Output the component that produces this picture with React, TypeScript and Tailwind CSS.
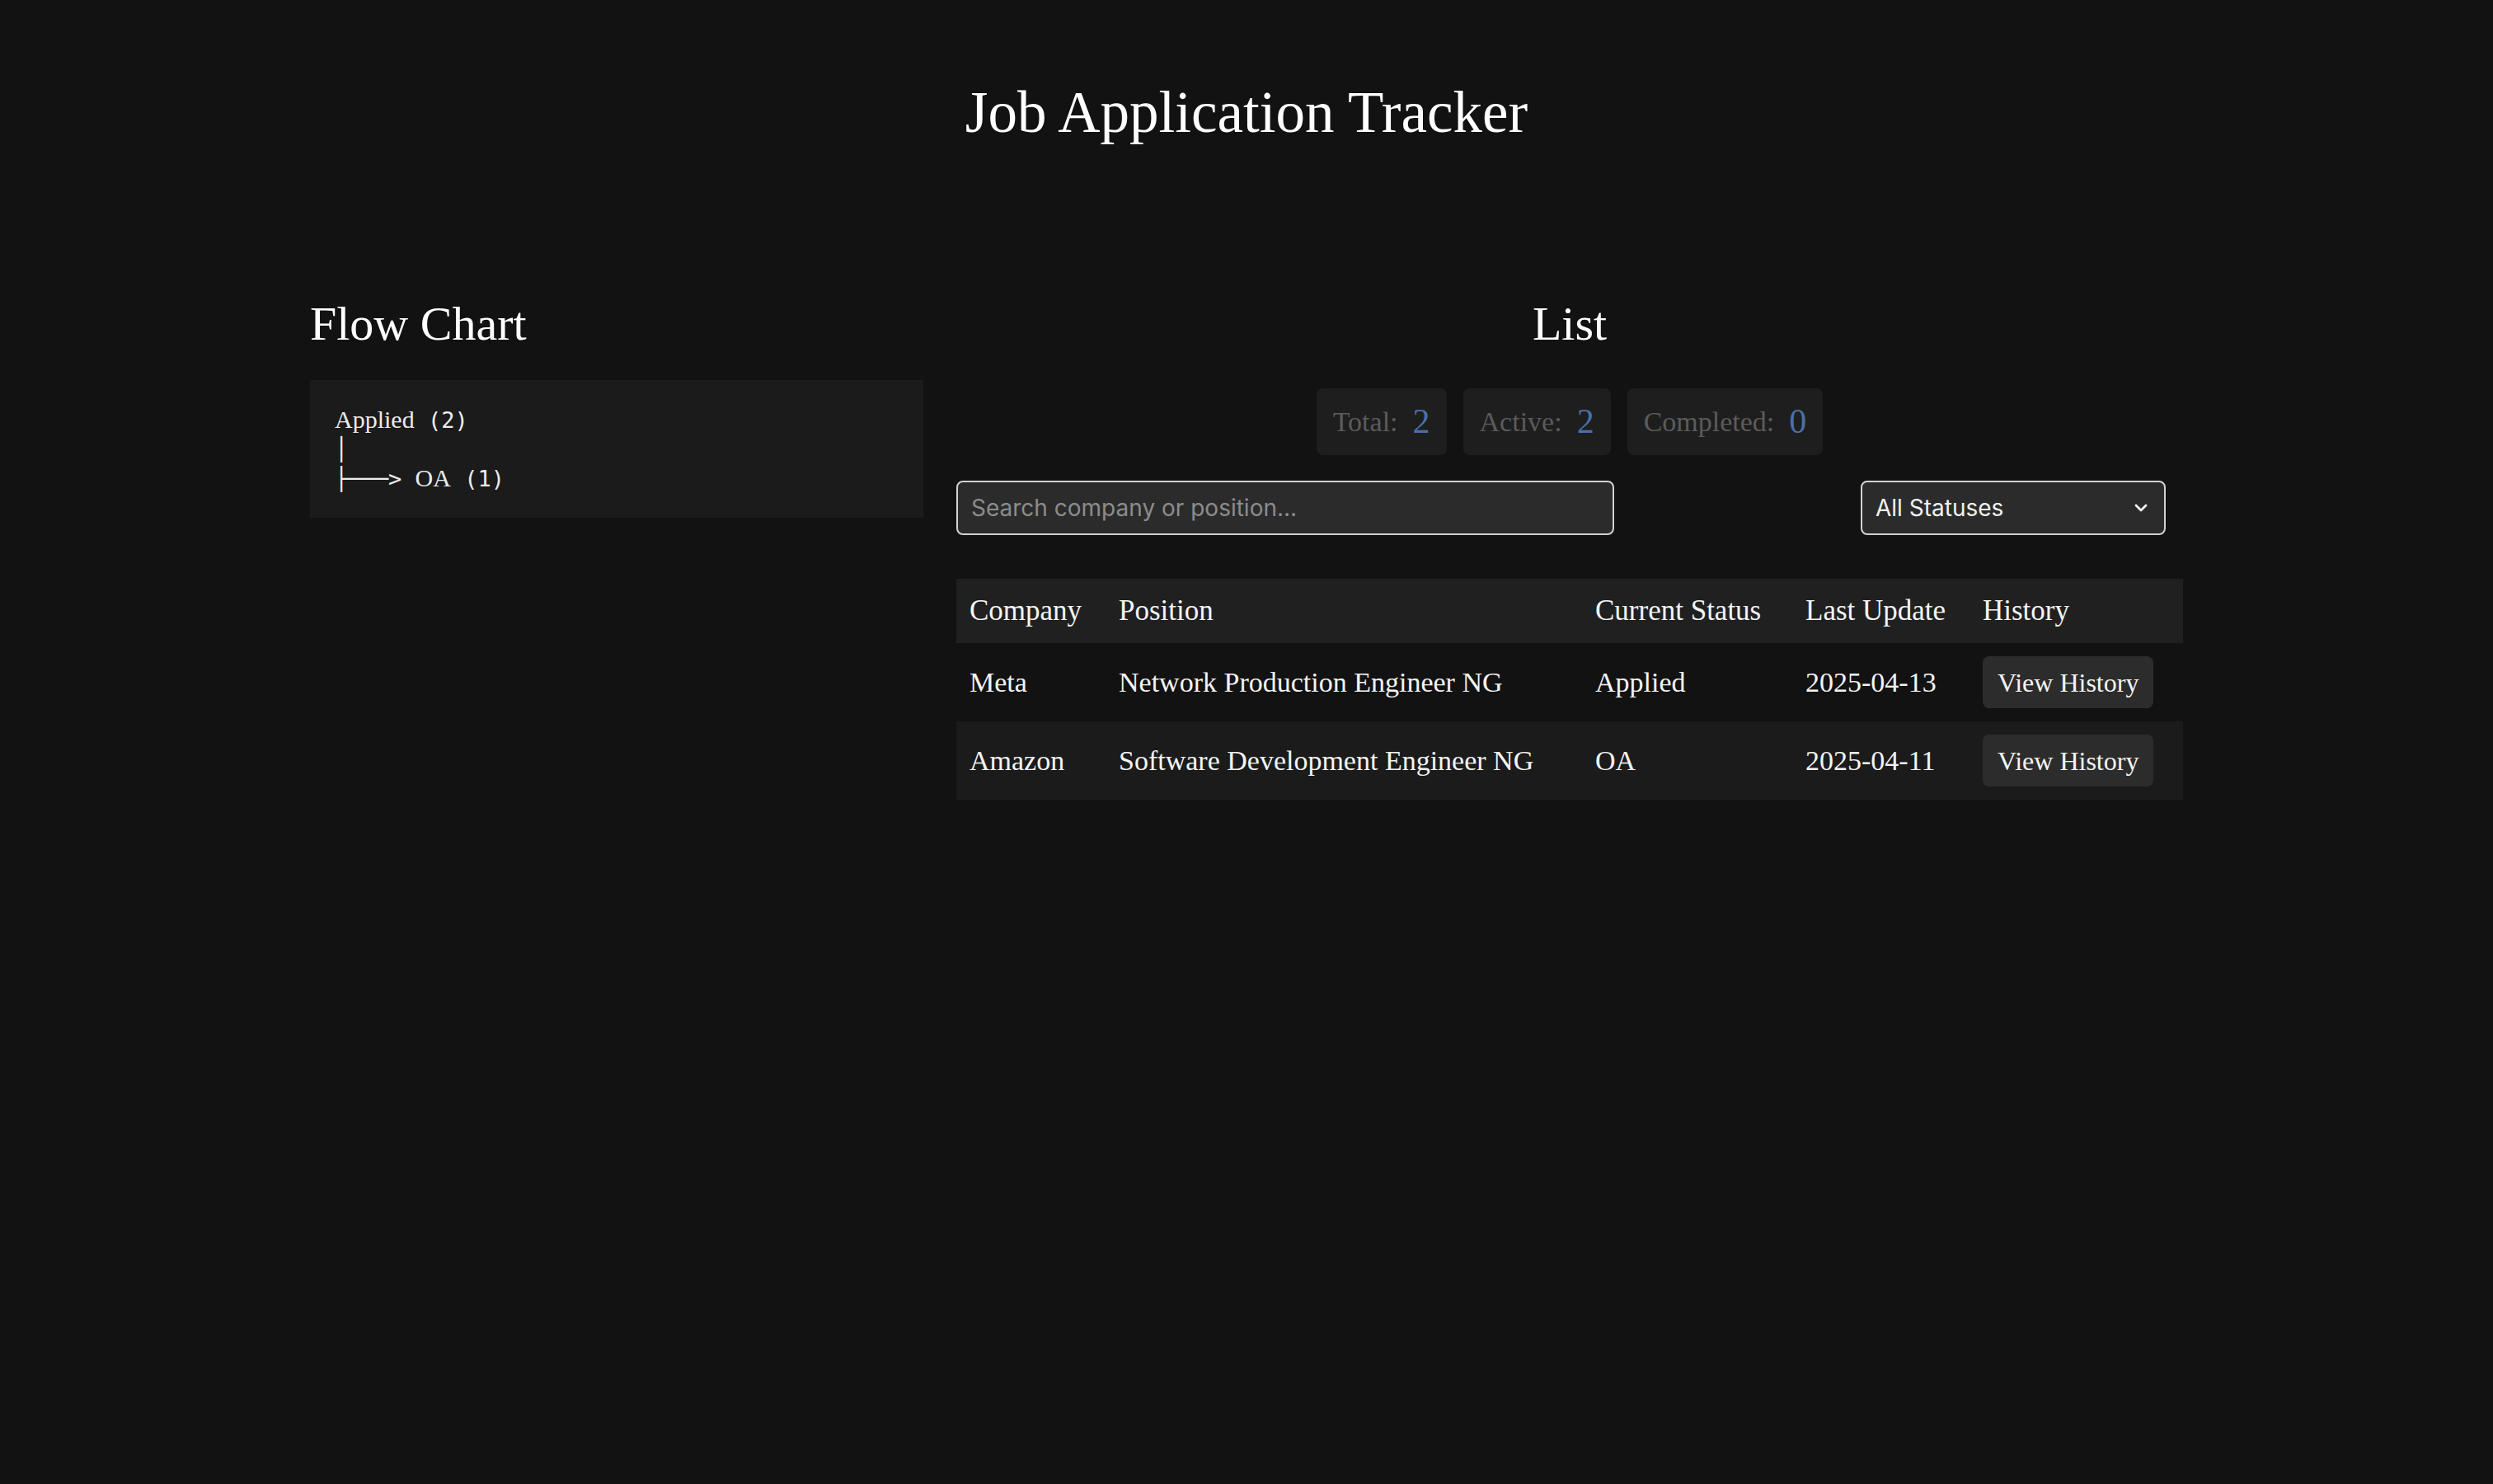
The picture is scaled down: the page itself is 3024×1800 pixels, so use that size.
import {ChevronDown} from 'lucide-react';
import {FC, memo, useState} from 'react';

type Application = {
  company: string;
  position: string;
  status: string;
  updated: string;
};

const applications: Application[] = [
  {company: 'Meta', position: 'Network Production Engineer NG', status: 'Applied', updated: '2025-04-13'},
  {company: 'Amazon', position: 'Software Development Engineer NG', status: 'OA', updated: '2025-04-11'},
];

const stats = [
  {label: 'Total:', value: 2},
  {label: 'Active:', value: 2},
  {label: 'Completed:', value: 0},
];

const FlowChart: FC = memo(() => (
  <div>
    <h2 className="text-[58px] leading-[64px] text-white">Flow Chart</h2>
    <div className="mt-[36px] whitespace-pre bg-[#1b1b1b] px-[30px] py-[30px] text-[30px] leading-[35px] text-[#ececec]">
      <div>
        <span>Applied</span>
        <span className="font-['DejaVu_Sans_Mono',monospace] text-[27px]"> (2)</span>
      </div>
      <div className="font-['DejaVu_Sans_Mono',monospace] text-[27px]">│</div>
      <div>
        <span className="font-['DejaVu_Sans_Mono',monospace] text-[27px]">├───&gt; </span>
        <span>OA</span>
        <span className="font-['DejaVu_Sans_Mono',monospace] text-[27px]"> (1)</span>
      </div>
    </div>
  </div>
));
FlowChart.displayName = 'FlowChart';

const ListPanel: FC = memo(() => {
  const [query, setQuery] = useState('');
  const [status, setStatus] = useState('all');

  return (
    <div>
      <h2 className="text-center text-[58px] leading-[64px] text-white">List</h2>

      <div className="mt-[46px] flex justify-center gap-[20px]">
        {stats.map(({label, value}) => (
          <div className="flex h-[81px] items-center gap-[18px] rounded-[8px] bg-[#1e1e1e] px-[20px]" key={label}>
            <span className="text-[34px] text-[#5b5b5b]">{label}</span>
            <span className="text-[42px] text-[#4a70a8]">{value}</span>
          </div>
        ))}
      </div>

      <div className="mt-[31px] flex items-center justify-between pr-[21px]">
        <input
          className="h-[66px] w-[798px] rounded-[8px] border-2 border-[#d2d2d2] bg-[#2b2b2b] px-[16px] font-['Inter',sans-serif] text-[28px] text-white outline-none placeholder:text-[#8c8c8c]"
          onChange={e => setQuery(e.target.value)}
          placeholder="Search company or position..."
          value={query}
        />
        <div className="relative">
          <select
            className="h-[66px] w-[370px] appearance-none rounded-[8px] border-2 border-[#d2d2d2] bg-[#2b2b2b] px-[16px] font-['Inter',sans-serif] text-[28px] text-[#f2f2f2] outline-none"
            onChange={e => setStatus(e.target.value)}
            value={status}>
            <option value="all">All Statuses</option>
            <option value="applied">Applied</option>
            <option value="oa">OA</option>
          </select>
          <ChevronDown
            className="pointer-events-none absolute right-[18px] top-1/2 h-[24px] w-[24px] -translate-y-1/2 text-[#f2f2f2]"
            strokeWidth={2.8}
          />
        </div>
      </div>

      <table className="mt-[53px] w-full table-fixed border-collapse text-left text-[34px] text-[#f4f4f4]">
        <colgroup>
          <col className="w-[181px]" />
          <col className="w-[578px]" />
          <col className="w-[255px]" />
          <col className="w-[215px]" />
          <col className="w-[259px]" />
        </colgroup>
        <thead>
          <tr className="h-[78px] bg-[#202020] text-[35px]">
            <th className="px-[16px] font-normal">Company</th>
            <th className="px-[16px] font-normal">Position</th>
            <th className="px-[16px] font-normal">Current Status</th>
            <th className="px-[16px] font-normal">Last Update</th>
            <th className="px-[16px] font-normal">History</th>
          </tr>
        </thead>
        <tbody>
          {applications.map(({company, position, status: current, updated}, index) => (
            <tr className={index % 2 === 0 ? 'h-[95px] bg-[#121212]' : 'h-[95px] bg-[#1b1b1b]'} key={company}>
              <td className="px-[16px]">{company}</td>
              <td className="whitespace-nowrap px-[16px]">{position}</td>
              <td className="px-[16px]">{current}</td>
              <td className="px-[16px]">{updated}</td>
              <td className="px-[16px]">
                <button className="h-[63px] rounded-[8px] bg-[#2c2c2c] px-[18px] text-[32px] text-[#f4f4f4]" type="button">
                  View History
                </button>
              </td>
            </tr>
          ))}
        </tbody>
      </table>
    </div>
  );
});
ListPanel.displayName = 'ListPanel';

const App: FC = () => {
  return (
    <div className="min-h-[1800px] bg-[#121212] font-['Liberation_Serif',serif]">
      <div className="mx-auto max-w-[2400px] px-[64px] pt-[96px]">
        <h1 className="text-center text-[71px] leading-[80px] text-white">Job Application Tracker</h1>
        <div className="mt-[185px] grid grid-cols-[1fr_2fr] gap-x-[40px]">
          <FlowChart />
          <ListPanel />
        </div>
      </div>
    </div>
  );
};

export default App;
